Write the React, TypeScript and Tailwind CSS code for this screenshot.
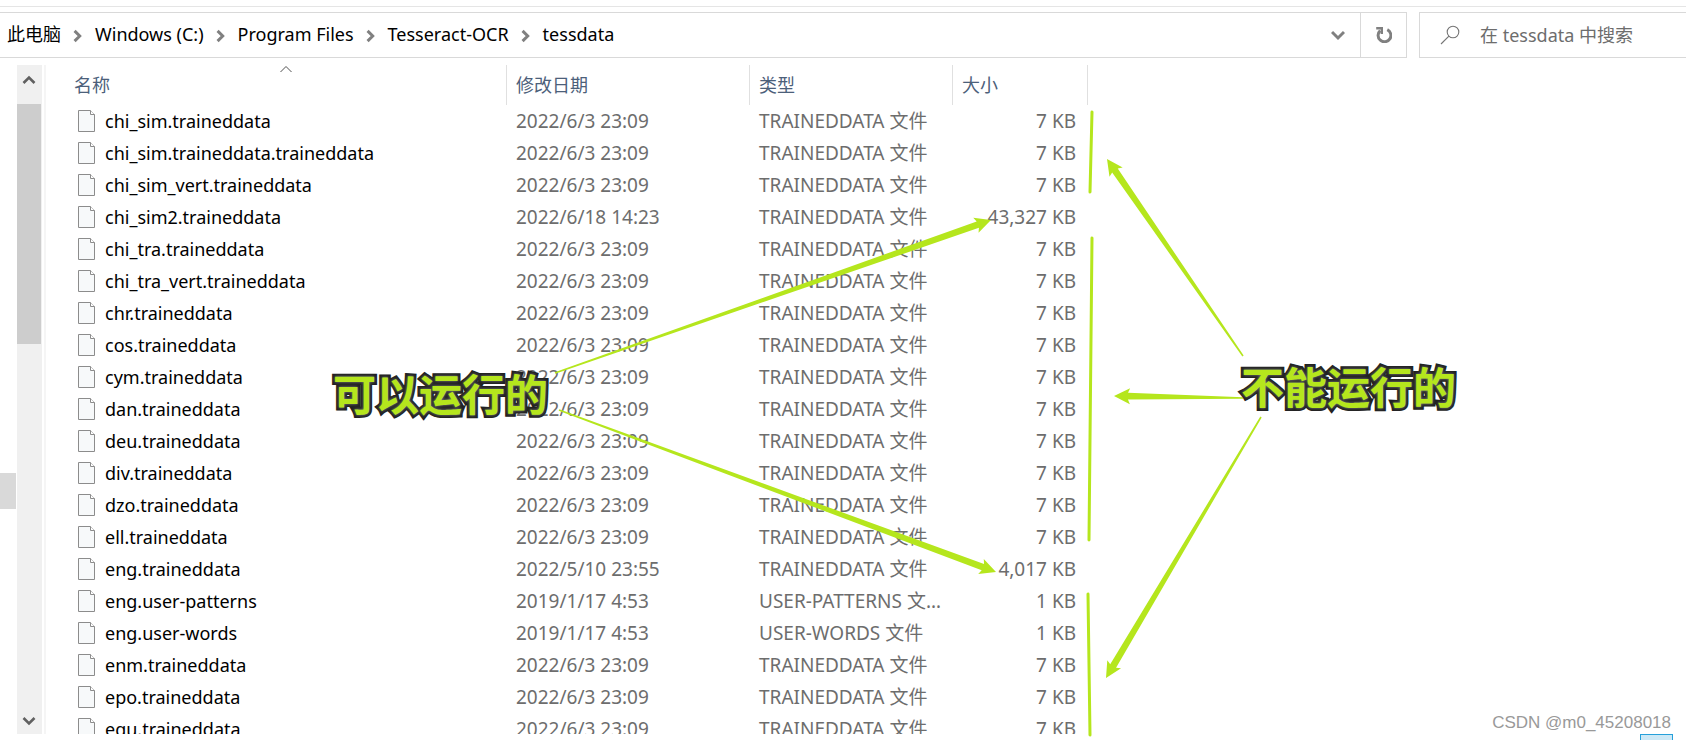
import { ReactNode } from "react"

type TFile = {
    name: string
    date?: string
    type?: string
    size?: string
}

type TPoint = [number, number]

const LIME = "#b5e61d"

const files: TFile[] = [
    { name: "chi_sim.traineddata" },
    { name: "chi_sim.traineddata.traineddata" },
    { name: "chi_sim_vert.traineddata" },
    { name: "chi_sim2.traineddata", date: "2022/6/18 14:23", size: "43,327 KB" },
    { name: "chi_tra.traineddata" },
    { name: "chi_tra_vert.traineddata" },
    { name: "chr.traineddata" },
    { name: "cos.traineddata" },
    { name: "cym.traineddata" },
    { name: "dan.traineddata" },
    { name: "deu.traineddata" },
    { name: "div.traineddata" },
    { name: "dzo.traineddata" },
    { name: "ell.traineddata" },
    { name: "eng.traineddata", date: "2022/5/10 23:55", size: "4,017 KB" },
    { name: "eng.user-patterns", date: "2019/1/17 4:53", type: "USER-PATTERNS 文件", size: "1 KB" },
    { name: "eng.user-words", date: "2019/1/17 4:53", type: "USER-WORDS 文件", size: "1 KB" },
    { name: "enm.traineddata" },
    { name: "epo.traineddata" },
    { name: "equ.traineddata" },
]

const crumbs = ["此电脑", "Windows (C:)", "Program Files", "Tesseract-OCR", "tessdata"]

const arrows: { from: TPoint; to: TPoint }[] = [
    { from: [555, 373], to: [991, 220] },
    { from: [559, 410], to: [996, 572] },
    { from: [1243, 356], to: [1107, 159] },
    { from: [1243, 398], to: [1114, 396] },
    { from: [1261, 417], to: [1106, 678] },
]

const brackets: { from: TPoint; to: TPoint }[] = [
    { from: [1092, 112], to: [1090, 192] },
    { from: [1092, 238], to: [1089, 540] },
    { from: [1088, 594], to: [1090, 735] },
]

// Tapered arrow: hairline tail that widens towards the head
function arrowPoints([x1, y1]: TPoint, [x2, y2]: TPoint) {
    const length = Math.hypot(x2 - x1, y2 - y1)
    const ux = (x2 - x1) / length
    const uy = (y2 - y1) / length
    const at = (back: number, side: number) =>
        `${x2 - ux * back - uy * side},${y2 - uy * back + ux * side}`

    return [
        at(0, 0),
        at(16, 8),
        at(14, 3.4),
        at(length, 0.8),
        at(length, -0.8),
        at(14, -3.4),
        at(16, -8),
    ].join(" ")
}

function Chevron({ className, d, width }: { className: string; d: string; width: number }) {
    return (
        <svg className={className} viewBox="0 0 14 14" fill="none" stroke="currentColor" strokeWidth={width}>
            <path d={d} />
        </svg>
    )
}

function FileIcon() {
    return (
        <svg className="w-[18px] h-[22px] shrink-0" viewBox="0 0 18 22" fill="none">
            <path d="M.5 .5H12.5L16.5 4.5V21.5H.5Z" fill="#f7f9fa" stroke="#8c8c8c" />
            <path d="M12.5 .5V4.5H16.5" fill="#fff" stroke="#8c8c8c" />
        </svg>
    )
}

function HeaderCell({ children, className }: { children: ReactNode; className: string }) {
    return (
        <th scope="col" className={`relative h-10 border-r border-[#e0e0e0] py-0 text-left font-normal text-[#4c607a] ${className}`}>
            {children}
        </th>
    )
}

function AddressBar() {
    return (
        <header className="flex h-[52px] shrink-0 gap-3 border-t border-[#e5e5e5] pt-[5px]">
            <div className="flex min-w-0 flex-1 border-y border-r border-[#d9d9d9]">
                <nav aria-label="路径" className="flex flex-1 items-center pl-[7px] pb-0.5">
                    {crumbs.map((crumb, index) => (
                        <div key={crumb} className="flex items-center">
                            {index > 0 && (
                                <Chevron className="mx-[9px] mt-1 size-4 text-[#808080]" d="M4 2.5L8.5 7L4 11.5" width={2.6} />
                            )}
                            <a href="#" className="whitespace-nowrap">{crumb}</a>
                        </div>
                    ))}
                </nav>
                <button type="button" aria-label="历史记录" className="flex w-11 items-center justify-center text-[#808080]">
                    <Chevron className="size-[14px]" d="M1 4L7 10L13 4" width={3} />
                </button>
                <button type="button" aria-label="刷新" className="flex w-[46px] items-center justify-center border-l border-[#d9d9d9] text-[#808080]">
                    <svg className="size-4" viewBox="0 0 16 16" fill="none" stroke="currentColor">
                        <path d="M11.3 2.6A6.4 6.4 0 1 1 4.2 3.6" strokeWidth="3" />
                        <path d="M.2 1.2H5.8V7" strokeWidth="2.4" />
                    </svg>
                </button>
            </div>
            <label className="flex w-[267px] shrink-0 items-center gap-5 border-y border-l border-[#d9d9d9] pl-5">
                <svg className="size-5 shrink-0" viewBox="0 0 20 20" fill="none" stroke="#757575" strokeWidth="1.1">
                    <circle cx="13" cy="7" r="5.8" />
                    <path d="M8.9 11.1L1 19" />
                </svg>
                <input
                    type="text"
                    aria-label="搜索"
                    placeholder="在 tessdata 中搜索"
                    className="min-w-0 flex-1 outline-none placeholder:text-[#6d6d6d] placeholder:opacity-100"
                />
            </label>
        </header>
    )
}

function ScrollBar() {
    return (
        <div className="flex w-[25px] flex-col bg-[#f0f0f0]">
            <button type="button" aria-label="向上滚动" className="flex h-[39px] w-6 items-center justify-center pb-2 text-[#606060]">
                <Chevron className="size-[14px]" d="M1.5 9L7 3.5L12.5 9" width={2.6} />
            </button>
            <div className="h-60 w-6 bg-[#cdcdcd]" />
            <button type="button" aria-label="向下滚动" className="mt-auto flex h-[26px] w-6 items-center justify-center text-[#606060]">
                <Chevron className="size-[14px]" d="M1.5 4L7 9.5L12.5 4" width={2.6} />
            </button>
        </div>
    )
}

function FileTable() {
    return (
        <table className="w-[1042px] table-fixed border-separate border-spacing-0">
            <thead>
                <tr>
                    <HeaderCell className="w-[461px] pl-7">
                        名称
                        <Chevron className="absolute left-5 right-0 top-0 mx-auto size-[14px] text-[#505050]" d="M1.5 7L7 1.5L12.5 7" width={1} />
                    </HeaderCell>
                    <HeaderCell className="w-[243px] pl-[9px]">修改日期</HeaderCell>
                    <HeaderCell className="w-[203px] pl-[9px]">类型</HeaderCell>
                    <HeaderCell className="w-[135px] pl-[9px]">大小</HeaderCell>
                </tr>
            </thead>
            <tbody className="text-[19px] text-[#6d6d6d]">
                {files.map((file) => (
                    <tr key={file.name} className="h-8">
                        <td className="p-0 pl-8">
                            <div className="flex items-center gap-[9px] text-[18px] text-black">
                                <FileIcon />
                                {file.name}
                            </div>
                        </td>
                        <td className="p-0 pl-[9px]">{file.date ?? "2022/6/3 23:09"}</td>
                        <td className="truncate p-0 pl-[9px] pr-3">{file.type ?? "TRAINEDDATA 文件"}</td>
                        <td className="p-0 pr-3 text-right">{file.size ?? "7 KB"}</td>
                    </tr>
                ))}
            </tbody>
        </table>
    )
}

function Note({ children, className }: { children: ReactNode; className: string }) {
    return (
        <p className={`absolute whitespace-nowrap font-['Noto_Sans_CJK_SC',sans-serif] text-[43px] leading-[44px] font-bold text-[#b5e61d] [-webkit-text-stroke:6px_#212121] [paint-order:stroke_fill] [text-shadow:0_0_3px_#888] ${className}`}>
            {children}
        </p>
    )
}

function Annotations() {
    return (
        <div className="pointer-events-none absolute inset-0">
            <svg className="absolute inset-0 size-full" fill={LIME}>
                {arrows.map(({ from, to }) => (
                    <polygon key={to.join()} points={arrowPoints(from, to)} />
                ))}
                {brackets.map(({ from, to }) => (
                    <line
                        key={to.join()}
                        x1={from[0]}
                        y1={from[1]}
                        x2={to[0]}
                        y2={to[1]}
                        stroke={LIME}
                        strokeWidth="3"
                        strokeLinecap="round"
                    />
                ))}
            </svg>
            <Note className="left-[333px] top-[370px]">可以运行的</Note>
            <Note className="left-[1241px] top-[363px]">不能运行的</Note>
            <p className="absolute right-[15px] bottom-[7px] font-['Liberation_Sans',sans-serif] text-[17px] leading-5 text-[#999]">
                CSDN @m0_45208018
            </p>
        </div>
    )
}

export default function App() {
    return (
        <div className="relative flex h-screen flex-col overflow-hidden bg-white pt-1.5 font-['Noto_Sans','Noto_Sans_CJK_SC',sans-serif] text-[18px] leading-6 text-black">
            <AddressBar />
            <main className="flex min-h-0 flex-1 pt-[7px]">
                <div className="flex w-[17px] shrink-0 flex-col">
                    <div className="mt-[408px] h-9 w-4 bg-[#d9d9d9]" />
                </div>
                <ScrollBar />
                <div className="ml-0.5 flex-1 overflow-hidden border-l-2 border-[#f5f5f5]">
                    <FileTable />
                </div>
            </main>
            <footer className="flex h-1.5 shrink-0 justify-end overflow-hidden pr-[13px]">
                <button type="button" aria-label="详细信息" className="h-6 w-[33px] border border-[#26a0da] bg-[#cce8f6]" />
            </footer>
            <Annotations />
        </div>
    )
}
